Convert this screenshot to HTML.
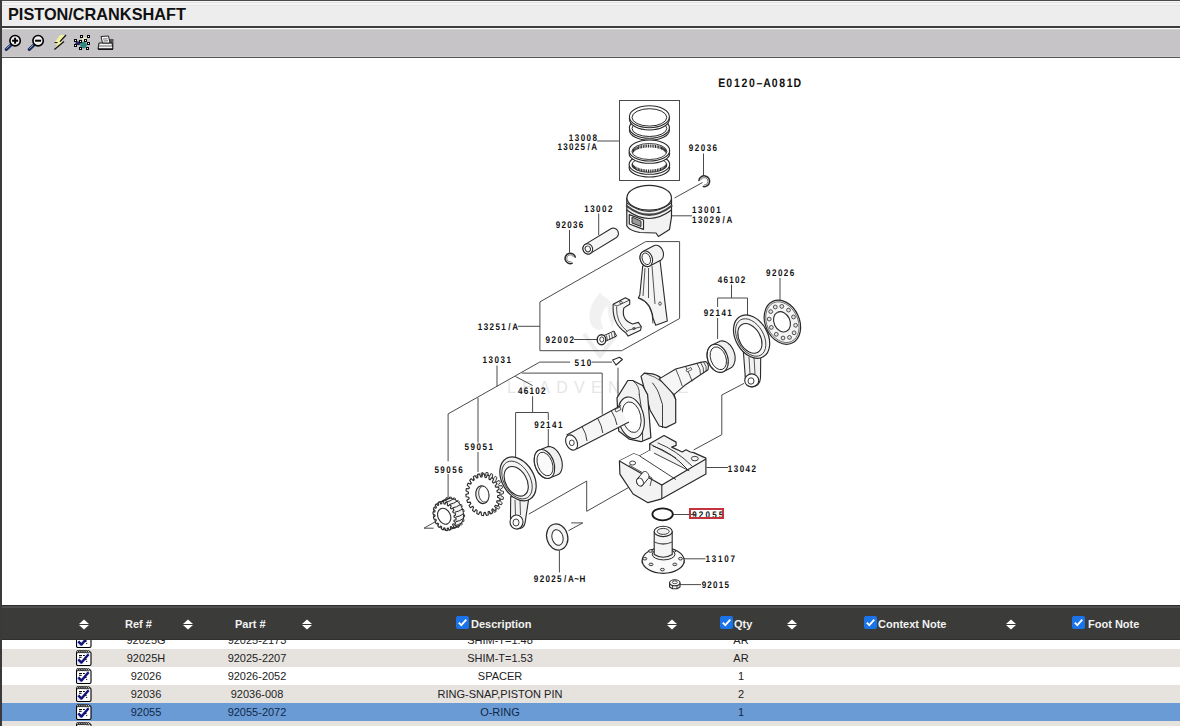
<!DOCTYPE html>
<html><head><meta charset="utf-8">
<style>
html,body{margin:0;padding:0;}
body{width:1180px;height:726px;overflow:hidden;position:relative;background:#fff;font-family:"Liberation Sans",sans-serif;}
.abs{position:absolute;}
#lb{left:0;top:0;width:2px;height:726px;background:#3a3a3a;}
#tt{left:0;top:0;width:1180px;height:1px;background:#4a4a4a;}
#title{left:2px;top:1px;width:1178px;height:25px;background:linear-gradient(#f6f6f6 0,#f6f6f6 1px,#e2e2e2 1px,#e2e2e2 2px,#f3f3f3 2px,#f3f3f3 4px,#e5e5e5 4px,#e5e5e5 5px,#ededed 5px);}
#title span{position:absolute;left:6px;top:4px;font-weight:bold;font-size:16.3px;color:#111;letter-spacing:0px;}
#l1{left:2px;top:26px;width:1178px;height:2px;background:#3c3c3c;}
#l2{left:2px;top:28px;width:1178px;height:1px;background:#fafafa;}
#tb{left:2px;top:29px;width:1178px;height:28px;background:linear-gradient(#d2d0d3 0,#d2d0d3 1px,#c6c4c7 1.5px,#c6c4c7 26.5px,#cfcdd0 27px);}
#l3{left:2px;top:57px;width:1178px;height:1px;background:#555;}
#diag{left:2px;top:58px;width:1178px;height:547px;background:#fff;}
#th{left:2px;top:605px;width:1178px;height:35px;background:linear-gradient(#2c2c2c 0,#2c2c2c 1px,#4e4e4c 1px,#4e4e4c 2.5px,#3b3c39 3px,#3b3c39 34px,#303030 34px);}
#th .t{position:absolute;top:13px;font-weight:bold;font-size:11px;color:#f2f2f2;line-height:13px;white-space:nowrap;}
.cb{position:absolute;}
.sort{position:absolute;width:10px;height:11px;}
.row{position:absolute;left:2px;width:1178px;height:18px;font-size:11px;color:#222;}
.row .c{position:absolute;top:3px;line-height:13px;white-space:nowrap;transform:translateX(-50%);}
.ic{position:absolute;left:74px;top:1px;width:16px;height:16px;}
.lb{font-family:"Liberation Sans",sans-serif;font-weight:bold;fill:#111;text-anchor:middle;text-rendering:geometricPrecision;}
</style></head><body>
<div id="tt" class="abs"></div>
<div id="title" class="abs"><span>PISTON/CRANKSHAFT</span></div>
<div id="l1" class="abs"></div>
<div id="l2" class="abs"></div>
<div id="tb" class="abs">
<svg width="130" height="28" style="position:absolute;left:0;top:0">
<g>
<line x1="8.6" y1="16.3" x2="4.3" y2="20.4" stroke="#1b2b5a" stroke-width="3.2" stroke-linecap="round"/>
<line x1="8.2" y1="16" x2="4.6" y2="19.4" stroke="#7aa0d0" stroke-width="1" stroke-linecap="round"/>
<circle cx="13.1" cy="11.7" r="5.2" fill="#f0f0f0" stroke="#000" stroke-width="1.6"/>
<line x1="10.1" y1="11.7" x2="16.1" y2="11.7" stroke="#000" stroke-width="2"/>
<line x1="13.1" y1="8.7" x2="13.1" y2="14.7" stroke="#000" stroke-width="2"/>
</g>
<g>
<line x1="31.6" y1="16.3" x2="27.3" y2="20.4" stroke="#1b2b5a" stroke-width="3.2" stroke-linecap="round"/>
<line x1="31.2" y1="16" x2="27.6" y2="19.4" stroke="#7aa0d0" stroke-width="1" stroke-linecap="round"/>
<circle cx="36.1" cy="11.7" r="5.2" fill="#f0f0f0" stroke="#000" stroke-width="1.6"/>
<line x1="33.1" y1="11.7" x2="39.1" y2="11.7" stroke="#000" stroke-width="2"/>
</g>
<g>
<polygon points="58,6 64,6 58,12.6 62,12.6 52.4,20.6 55.6,14.3 52.2,14.3" fill="#f3f0a0"/>
<polyline points="64,6 58,12.6" stroke="#111" stroke-width="1.3" fill="none"/>
<polyline points="62,12.6 52.4,20.6" stroke="#111" stroke-width="1.3" fill="none"/>
<line x1="52.4" y1="13.5" x2="55.6" y2="13.5" stroke="#222" stroke-width="1"/>
</g>
<g>
<ellipse cx="82.4" cy="10" rx="2.5" ry="2" fill="#ecebb8"/>
<ellipse cx="76" cy="14.3" rx="2.6" ry="2" fill="#23235e"/>
<circle cx="81.5" cy="16.1" r="3.3" fill="#2b8a80"/>
<g fill="#fff" stroke="#000" stroke-width="1"><rect x="72.5" y="10.5" width="2" height="2"/><rect x="72.5" y="15.5" width="2" height="2"/><rect x="78.5" y="6.5" width="2" height="2"/><rect x="85.5" y="6.5" width="2" height="2"/><rect x="77.5" y="11.5" width="2" height="2"/><rect x="82.5" y="10.5" width="2" height="2"/><rect x="85.5" y="13.5" width="2" height="2"/><rect x="77.5" y="18.5" width="2" height="2"/><rect x="84.5" y="18.5" width="2" height="2"/></g>
</g>
<g>
<rect x="105.5" y="10" width="6" height="8" fill="#555"/>
<polygon points="97,14 110,14 111,20 96,20" fill="#f4f4f4" stroke="#111" stroke-width="1"/>
<polygon points="99,7.5 106.5,7 108,14 100.5,14" fill="#fafafa" stroke="#222" stroke-width="1"/>
<line x1="101" y1="10" x2="105.5" y2="9.8" stroke="#444" stroke-width="0.8"/>
<line x1="101.5" y1="12" x2="106" y2="11.8" stroke="#444" stroke-width="0.8"/>
<line x1="96.5" y1="17" x2="110.5" y2="17" stroke="#666" stroke-width="1"/>
<line x1="96" y1="20.2" x2="111" y2="20.2" stroke="#000" stroke-width="1.2"/>
</g>
</svg>
</div>
<div id="l3" class="abs"></div>
<div id="diag" class="abs">
<svg id="dsvg" width="1178" height="547" viewBox="2 58 1178 547" style="position:absolute;left:0;top:0">
<g fill="#e6e6e6" font-family="Liberation Sans" font-size="16" letter-spacing="6.3"><text x="507" y="392.5">LEADVENTURE</text></g>
<path d="M600 293 C590 304 587 316 592 326 C595 330 600 331 603 328 C598 320 602 310 608 305 C607 315 611 322 612 327 C617 318 614 304 606 298 C603 296 601 295 600 293 Z" fill="#f1f1f1" stroke="#f0f0f0" stroke-width="0.5" stroke-linejoin="round" stroke-linecap="round"/>
<path d="M584 334 L600 356 L617 334" fill="none" stroke="#eeeeee" stroke-width="4"/>
<polyline points="597,141 619.5,141" fill="none" stroke="#4a4a4a" stroke-width="1"/>
<rect x="619.5" y="100.5" width="60" height="80" fill="none" stroke="#4a4a4a" stroke-width="1"/>
<polyline points="703.5,153.5 703.5,175.5" fill="none" stroke="#4a4a4a" stroke-width="1"/>
<polyline points="674.5,198 702.5,182.5" fill="none" stroke="#4a4a4a" stroke-width="1"/>
<polyline points="671.5,215.8 692,215.8" fill="none" stroke="#4a4a4a" stroke-width="1"/>
<polyline points="598.7,213.5 598.7,235" fill="none" stroke="#4a4a4a" stroke-width="1"/>
<polyline points="569.5,230 569.5,252.5" fill="none" stroke="#4a4a4a" stroke-width="1"/>
<polygon points="539.9,301.9 645.7,241.6 679.6,241.6 679.6,318.5 621.7,350.7 539.9,350.7" fill="none" stroke="#4a4a4a" stroke-width="1" stroke-linejoin="round"/>
<polyline points="518,326.3 540,326.3" fill="none" stroke="#4a4a4a" stroke-width="1"/>
<polyline points="574,339.5 598,339.5" fill="none" stroke="#4a4a4a" stroke-width="1"/>
<polyline points="731.5,284.5 731.5,298" fill="none" stroke="#4a4a4a" stroke-width="1"/>
<polyline points="717.6,307 717.6,298 747.5,298 747.5,315" fill="none" stroke="#4a4a4a" stroke-width="1"/>
<polyline points="717.6,318 717.6,339" fill="none" stroke="#4a4a4a" stroke-width="1"/>
<polyline points="780,278 780,300" fill="none" stroke="#4a4a4a" stroke-width="1"/>
<polyline points="497,365.5 497,386.5" fill="none" stroke="#4a4a4a" stroke-width="1"/>
<polyline points="448.1,461.3 448.1,413.9 539.7,362.1 570.2,362.1" fill="none" stroke="#4a4a4a" stroke-width="1"/>
<polyline points="591.6,362.1 612,362.1" fill="none" stroke="#4a4a4a" stroke-width="1"/>
<polyline points="521.9,373.1 602.2,373.1 602.2,414.5" fill="none" stroke="#4a4a4a" stroke-width="1"/>
<polyline points="515.3,376.4 532.6,385.5" fill="none" stroke="#4a4a4a" stroke-width="1"/>
<polyline points="618,367.7 618,396" fill="none" stroke="#4a4a4a" stroke-width="1"/>
<polyline points="478,397.8 478,442.5" fill="none" stroke="#4a4a4a" stroke-width="1"/>
<polyline points="478,452 478,472" fill="none" stroke="#4a4a4a" stroke-width="1"/>
<polyline points="532.6,396.2 532.6,412.5" fill="none" stroke="#4a4a4a" stroke-width="1"/>
<polyline points="515.6,458 515.6,412.5 548.3,412.5 548.3,420" fill="none" stroke="#4a4a4a" stroke-width="1"/>
<polyline points="548.3,429 548.3,446" fill="none" stroke="#4a4a4a" stroke-width="1"/>
<polyline points="448.1,474 448.1,499" fill="none" stroke="#4a4a4a" stroke-width="1"/>
<polyline points="706.6,467.5 728,467.5" fill="none" stroke="#4a4a4a" stroke-width="1"/>
<polyline points="693.7,449.9 721.8,434.7 721.8,395 744,383.4" fill="none" stroke="#4a4a4a" stroke-width="1"/>
<polyline points="528.8,514.1 586.7,481 586.7,511.3 637,482.7" fill="none" stroke="#4a4a4a" stroke-width="1"/>
<polyline points="571.2,522.9 582.8,522.9 568.5,530.6" fill="none" stroke="#4a4a4a" stroke-width="1"/>
<polyline points="559.4,550.3 559.4,572.5" fill="none" stroke="#4a4a4a" stroke-width="1"/>
<polyline points="673,514.5 695.5,514.5" fill="none" stroke="#4a4a4a" stroke-width="1"/>
<polyline points="683.1,558.8 705.5,558.8" fill="none" stroke="#4a4a4a" stroke-width="1"/>
<polyline points="679.6,584.6 701,584.6" fill="none" stroke="#4a4a4a" stroke-width="1"/>
<polyline points="424,528.2 443.2,517.2" fill="none" stroke="#4a4a4a" stroke-width="1"/>
<polyline points="424,528.2 433.6,528.2" fill="none" stroke="#4a4a4a" stroke-width="1"/>
<ellipse cx="649.4" cy="130.0" rx="20" ry="10.4" transform="rotate(0 649.4 130.0)" fill="#fff" stroke="#2a2a2a" stroke-width="1.1"/>
<ellipse cx="649.4" cy="127.8" rx="20" ry="10.4" transform="rotate(0 649.4 127.8)" fill="#fff" stroke="#2a2a2a" stroke-width="1.1"/>
<ellipse cx="649.4" cy="128.4" rx="17.4" ry="8.100000000000001" transform="rotate(0 649.4 128.4)" fill="none" stroke="#2a2a2a" stroke-width="1.0"/>
<ellipse cx="649.4" cy="119.0" rx="20" ry="11.0" transform="rotate(0 649.4 119.0)" fill="#fff" stroke="#2a2a2a" stroke-width="1.1"/>
<ellipse cx="649.4" cy="116.8" rx="20" ry="11.0" transform="rotate(0 649.4 116.8)" fill="#fff" stroke="#2a2a2a" stroke-width="1.1"/>
<ellipse cx="649.4" cy="117.39999999999999" rx="17.4" ry="8.7" transform="rotate(0 649.4 117.39999999999999)" fill="none" stroke="#2a2a2a" stroke-width="1.0"/>
<ellipse cx="649.4" cy="167.5" rx="20.3" ry="9.5" transform="rotate(0 649.4 167.5)" fill="#fff" stroke="#2a2a2a" stroke-width="1.1"/>
<ellipse cx="649.4" cy="164.5" rx="20.3" ry="9.8" transform="rotate(0 649.4 164.5)" fill="#fff" stroke="#2a2a2a" stroke-width="1.1"/>
<ellipse cx="649.4" cy="164.8" rx="17.5" ry="7.5" transform="rotate(0 649.4 164.8)" fill="none" stroke="#2a2a2a" stroke-width="0.9"/>
<line x1="666.4" y1="163.9" x2="666.4" y2="166.9" stroke="#2a2a2a" stroke-width="1"/>
<line x1="665.8" y1="164.6" x2="665.8" y2="167.6" stroke="#2a2a2a" stroke-width="1"/>
<line x1="665.1" y1="165.3" x2="665.1" y2="168.3" stroke="#2a2a2a" stroke-width="1"/>
<line x1="664.2" y1="166.0" x2="664.2" y2="169.0" stroke="#2a2a2a" stroke-width="1"/>
<line x1="663.1" y1="166.7" x2="663.1" y2="169.7" stroke="#2a2a2a" stroke-width="1"/>
<line x1="661.9" y1="167.3" x2="661.9" y2="170.3" stroke="#2a2a2a" stroke-width="1"/>
<line x1="660.5" y1="167.8" x2="660.5" y2="170.8" stroke="#2a2a2a" stroke-width="1"/>
<line x1="659.0" y1="168.3" x2="659.0" y2="171.3" stroke="#2a2a2a" stroke-width="1"/>
<line x1="657.4" y1="168.7" x2="657.4" y2="171.7" stroke="#2a2a2a" stroke-width="1"/>
<line x1="655.7" y1="169.0" x2="655.7" y2="172.0" stroke="#2a2a2a" stroke-width="1"/>
<line x1="654.0" y1="169.2" x2="654.0" y2="172.2" stroke="#2a2a2a" stroke-width="1"/>
<line x1="652.2" y1="169.4" x2="652.2" y2="172.4" stroke="#2a2a2a" stroke-width="1"/>
<line x1="650.3" y1="169.5" x2="650.3" y2="172.5" stroke="#2a2a2a" stroke-width="1"/>
<line x1="648.5" y1="169.5" x2="648.5" y2="172.5" stroke="#2a2a2a" stroke-width="1"/>
<line x1="646.6" y1="169.4" x2="646.6" y2="172.4" stroke="#2a2a2a" stroke-width="1"/>
<line x1="644.8" y1="169.2" x2="644.8" y2="172.2" stroke="#2a2a2a" stroke-width="1"/>
<line x1="643.1" y1="169.0" x2="643.1" y2="172.0" stroke="#2a2a2a" stroke-width="1"/>
<line x1="641.4" y1="168.7" x2="641.4" y2="171.7" stroke="#2a2a2a" stroke-width="1"/>
<line x1="639.8" y1="168.3" x2="639.8" y2="171.3" stroke="#2a2a2a" stroke-width="1"/>
<line x1="638.3" y1="167.8" x2="638.3" y2="170.8" stroke="#2a2a2a" stroke-width="1"/>
<line x1="636.9" y1="167.3" x2="636.9" y2="170.3" stroke="#2a2a2a" stroke-width="1"/>
<line x1="635.7" y1="166.7" x2="635.7" y2="169.7" stroke="#2a2a2a" stroke-width="1"/>
<line x1="634.6" y1="166.0" x2="634.6" y2="169.0" stroke="#2a2a2a" stroke-width="1"/>
<line x1="633.7" y1="165.3" x2="633.7" y2="168.3" stroke="#2a2a2a" stroke-width="1"/>
<line x1="633.0" y1="164.6" x2="633.0" y2="167.6" stroke="#2a2a2a" stroke-width="1"/>
<line x1="632.4" y1="163.9" x2="632.4" y2="166.9" stroke="#2a2a2a" stroke-width="1"/>
<ellipse cx="649.4" cy="153.5" rx="20.3" ry="9.8" transform="rotate(0 649.4 153.5)" fill="#fff" stroke="#2a2a2a" stroke-width="1.1"/>
<ellipse cx="649.4" cy="150.5" rx="20.3" ry="10.5" transform="rotate(0 649.4 150.5)" fill="#fff" stroke="#2a2a2a" stroke-width="1.1"/>
<ellipse cx="649.4" cy="151.5" rx="17.5" ry="8" transform="rotate(0 649.4 151.5)" fill="none" stroke="#2a2a2a" stroke-width="0.9"/>
<line x1="632.9" y1="149.8" x2="632.9" y2="152.8" stroke="#2a2a2a" stroke-width="1"/>
<line x1="633.5" y1="149.1" x2="633.5" y2="152.1" stroke="#2a2a2a" stroke-width="1"/>
<line x1="634.2" y1="148.4" x2="634.2" y2="151.4" stroke="#2a2a2a" stroke-width="1"/>
<line x1="635.1" y1="147.7" x2="635.1" y2="150.7" stroke="#2a2a2a" stroke-width="1"/>
<line x1="636.1" y1="147.1" x2="636.1" y2="150.1" stroke="#2a2a2a" stroke-width="1"/>
<line x1="637.3" y1="146.6" x2="637.3" y2="149.6" stroke="#2a2a2a" stroke-width="1"/>
<line x1="638.6" y1="146.1" x2="638.6" y2="149.1" stroke="#2a2a2a" stroke-width="1"/>
<line x1="640.1" y1="145.6" x2="640.1" y2="148.6" stroke="#2a2a2a" stroke-width="1"/>
<line x1="641.6" y1="145.3" x2="641.6" y2="148.3" stroke="#2a2a2a" stroke-width="1"/>
<line x1="643.3" y1="145.0" x2="643.3" y2="148.0" stroke="#2a2a2a" stroke-width="1"/>
<line x1="645.0" y1="144.7" x2="645.0" y2="147.7" stroke="#2a2a2a" stroke-width="1"/>
<line x1="646.7" y1="144.6" x2="646.7" y2="147.6" stroke="#2a2a2a" stroke-width="1"/>
<line x1="648.5" y1="144.5" x2="648.5" y2="147.5" stroke="#2a2a2a" stroke-width="1"/>
<line x1="650.3" y1="144.5" x2="650.3" y2="147.5" stroke="#2a2a2a" stroke-width="1"/>
<line x1="652.1" y1="144.6" x2="652.1" y2="147.6" stroke="#2a2a2a" stroke-width="1"/>
<line x1="653.8" y1="144.7" x2="653.8" y2="147.7" stroke="#2a2a2a" stroke-width="1"/>
<line x1="655.5" y1="145.0" x2="655.5" y2="148.0" stroke="#2a2a2a" stroke-width="1"/>
<line x1="657.2" y1="145.3" x2="657.2" y2="148.3" stroke="#2a2a2a" stroke-width="1"/>
<line x1="658.7" y1="145.6" x2="658.7" y2="148.6" stroke="#2a2a2a" stroke-width="1"/>
<line x1="660.2" y1="146.1" x2="660.2" y2="149.1" stroke="#2a2a2a" stroke-width="1"/>
<line x1="661.5" y1="146.6" x2="661.5" y2="149.6" stroke="#2a2a2a" stroke-width="1"/>
<line x1="662.7" y1="147.1" x2="662.7" y2="150.1" stroke="#2a2a2a" stroke-width="1"/>
<line x1="663.7" y1="147.7" x2="663.7" y2="150.7" stroke="#2a2a2a" stroke-width="1"/>
<line x1="664.6" y1="148.4" x2="664.6" y2="151.4" stroke="#2a2a2a" stroke-width="1"/>
<line x1="665.3" y1="149.1" x2="665.3" y2="152.1" stroke="#2a2a2a" stroke-width="1"/>
<line x1="665.9" y1="149.8" x2="665.9" y2="152.8" stroke="#2a2a2a" stroke-width="1"/>
<path d="M626.8 198 L626.8 226 Q630 231 640 232.5 L656 233 L658.4 236.5 L669.5 229.4 L671.5 217 L671.5 198 Z" fill="#f2f2f2" stroke="#2a2a2a" stroke-width="1.2" stroke-linejoin="round" stroke-linecap="round"/>
<ellipse cx="649.2" cy="197.8" rx="22.3" ry="12.4" transform="rotate(0 649.2 197.8)" fill="#fff" stroke="#2a2a2a" stroke-width="1.2"/>
<path d="M626.8 203 Q649 220 671.5 203" fill="none" stroke="#2a2a2a" stroke-width="1" stroke-linejoin="round" stroke-linecap="round"/>
<path d="M626.8 206 Q649 223.5 671.5 206" fill="none" stroke="#444" stroke-width="2.2" stroke-linejoin="round" stroke-linecap="round"/>
<path d="M626.8 210 Q649 227 671.5 210" fill="none" stroke="#2a2a2a" stroke-width="1.2" stroke-linejoin="round" stroke-linecap="round"/>
<path d="M629.3 214.6 L629.3 224 L643.5 229.4 L643.5 220 Z" fill="#fff" stroke="#2a2a2a" stroke-width="1.2" stroke-linejoin="round" stroke-linecap="round"/>
<path d="M632 217.5 L632 223 L641 226.5 L641 221.5 Z" fill="#9a9a9a" stroke="#2a2a2a" stroke-width="1" stroke-linejoin="round" stroke-linecap="round"/>
<path d="M698.9 180.4 A5.4 5.4 0 1 1 703.3 186.6" fill="none" stroke="#2a2a2a" stroke-width="1.5" stroke-linejoin="round" stroke-linecap="round"/>
<path d="M700.6 180.0 A3.8 3.8 0 1 1 704.2 185.1" fill="none" stroke="#2a2a2a" stroke-width="0.6" stroke-linejoin="round" stroke-linecap="round"/>
<path d="M572.1 263.3 A5.2 5.2 0 1 1 575.3 257.1" fill="none" stroke="#2a2a2a" stroke-width="1.5" stroke-linejoin="round" stroke-linecap="round"/>
<path d="M570.9 261.9 A3.6 3.6 0 1 1 573.6 256.9" fill="none" stroke="#2a2a2a" stroke-width="0.6" stroke-linejoin="round" stroke-linecap="round"/>
<polygon points="582.9,248.7 582.9,248.1 583.0,247.4 583.2,246.8 583.5,246.2 583.8,245.7 584.2,245.2 584.7,244.8 585.2,244.4 610.9,228.7 611.5,228.4 612.1,228.2 612.7,228.1 613.3,228.1 614.0,228.2 614.6,228.3 615.2,228.6 615.8,228.9 616.4,229.3 616.8,229.7 617.3,230.2 617.7,230.8 618.0,231.4 618.2,232.1 618.3,232.7 618.4,233.4 618.4,234.0 618.3,234.7 618.1,235.3 617.8,235.9 617.5,236.4 617.1,236.9 616.6,237.3 616.1,237.7 590.4,253.4 589.8,253.7 589.2,253.9 588.6,254.0 588.0,254.0 587.3,253.9 586.7,253.8 586.1,253.6 585.5,253.2 585.0,252.8 584.5,252.4 584.0,251.9 583.6,251.3 583.3,250.7 583.1,250.1 583.0,249.4" fill="#f6f6f6" stroke="#2a2a2a" stroke-width="1.1" stroke-linejoin="round"/>
<ellipse cx="587.8" cy="248.9" rx="4.8" ry="5.2" transform="rotate(-30 587.8 248.9)" fill="#fff" stroke="#2a2a2a" stroke-width="1.1"/>
<ellipse cx="587.8" cy="248.9" rx="2.6" ry="3.0" transform="rotate(-30 587.8 248.9)" fill="#fafafa" stroke="#2a2a2a" stroke-width="0.9"/>
<path d="M642.7 266 L639.8 294.9 L638.4 297.8 Q651 302 653 318 L655.7 325.3 L667.3 321 L665.8 309.4 L660 260.2 Z" fill="#f4f4f4" stroke="#2a2a2a" stroke-width="1.1" stroke-linejoin="round" stroke-linecap="round"/>
<polygon points="640.0,257.8 640.0,256.8 640.2,255.8 640.4,254.9 640.7,254.1 641.1,253.3 641.6,252.6 642.2,252.1 642.9,251.6 653.8,245.8 654.5,245.5 655.2,245.3 656.0,245.2 656.8,245.3 657.6,245.5 658.5,245.8 659.2,246.2 660.0,246.8 660.7,247.5 661.4,248.2 661.9,249.1 662.4,250.0 662.8,250.9 663.1,251.9 663.4,253.0 663.5,254.0 663.5,255.0 663.3,255.9 663.1,256.9 662.8,257.7 662.4,258.5 661.9,259.2 661.3,259.7 660.6,260.2 649.8,266.0 649.0,266.3 648.3,266.5 647.5,266.6 646.7,266.5 645.9,266.3 645.0,266.0 644.2,265.6 643.5,265.0 642.8,264.3 642.1,263.6 641.6,262.7 641.1,261.8 640.7,260.9 640.4,259.9 640.1,258.8" fill="#f2f2f2" stroke="#2a2a2a" stroke-width="1.1" stroke-linejoin="round"/>
<ellipse cx="646.3" cy="258.8" rx="6" ry="8" transform="rotate(-20 646.3 258.8)" fill="#fff" stroke="#2a2a2a" stroke-width="1.1"/>
<ellipse cx="646.3" cy="258.8" rx="4" ry="6" transform="rotate(-20 646.3 258.8)" fill="#fafafa" stroke="#2a2a2a" stroke-width="0.9"/>
<polyline points="645,268 643,296" fill="none" stroke="#2a2a2a" stroke-width="0.8"/>
<polyline points="648.5,268 648.5,298" fill="none" stroke="#2a2a2a" stroke-width="0.8"/>
<polyline points="652,266 655,304" fill="none" stroke="#2a2a2a" stroke-width="0.8"/>
<ellipse cx="660" cy="303.6" rx="1.3" ry="1.6" transform="rotate(0 660 303.6)" fill="none" stroke="#2a2a2a" stroke-width="0.8"/>
<path d="M638.4 298 Q653 303 653 323" fill="none" stroke="#2a2a2a" stroke-width="0.9" stroke-linejoin="round" stroke-linecap="round"/>
<path d="M613.1 304.3 L625.4 297.8 L629.7 300 L629.7 304.3 L623.9 307.9 Q621 320 632.6 324 L638.4 322.4 L641.3 326.7 L640.5 330.3 L628.2 336.1 L625.4 332.5 Q613 324 613.1 308 Z" fill="#f4f4f4" stroke="#2a2a2a" stroke-width="1.1" stroke-linejoin="round" stroke-linecap="round"/>
<path d="M616.5 307 Q616 323 627 331" fill="none" stroke="#2a2a2a" stroke-width="0.8" stroke-linejoin="round" stroke-linecap="round"/>
<polyline points="613.1,304.3 617,306 629.7,300" fill="none" stroke="#2a2a2a" stroke-width="0.8"/>
<polyline points="625.4,332.5 629,330 641.3,326.7" fill="none" stroke="#2a2a2a" stroke-width="0.8"/>
<ellipse cx="621" cy="302.5" rx="1.5" ry="1" transform="rotate(0 621 302.5)" fill="none" stroke="#2a2a2a" stroke-width="0.7"/>
<ellipse cx="634" cy="328.5" rx="1.5" ry="1" transform="rotate(0 634 328.5)" fill="none" stroke="#2a2a2a" stroke-width="0.7"/>
<polygon points="603,336 614,331 616.5,336 605,341.5" fill="#fff" stroke="#2a2a2a" stroke-width="1" stroke-linejoin="round"/>
<line x1="606.5" y1="335.5" x2="607.5" y2="340.8" stroke="#2a2a2a" stroke-width="0.8"/>
<line x1="609.0" y1="334.4" x2="610.0" y2="339.7" stroke="#2a2a2a" stroke-width="0.8"/>
<line x1="611.5" y1="333.2" x2="612.5" y2="338.5" stroke="#2a2a2a" stroke-width="0.8"/>
<line x1="614.0" y1="332.1" x2="615.0" y2="337.4" stroke="#2a2a2a" stroke-width="0.8"/>
<ellipse cx="601.5" cy="339.7" rx="4.3" ry="5" transform="rotate(0 601.5 339.7)" fill="#fff" stroke="#2a2a2a" stroke-width="1.4"/>
<ellipse cx="601.8" cy="339.5" rx="2" ry="2.6" transform="rotate(0 601.8 339.5)" fill="none" stroke="#2a2a2a" stroke-width="0.9"/>
<polygon points="707.1,354.4 707.2,352.7 707.5,351.1 708.0,349.6 708.7,348.2 709.5,347.0 710.5,346.0 711.6,345.2 718.4,341.9 719.5,341.4 720.8,341.0 722.1,340.9 723.5,341.1 724.9,341.5 726.3,342.1 727.6,342.9 728.9,344.0 730.2,345.2 731.3,346.6 732.3,348.2 733.2,349.8 733.9,351.6 734.5,353.4 734.9,355.2 735.1,357.1 735.1,358.9 735.0,360.6 734.6,362.2 734.1,363.7 733.5,365.1 732.7,366.3 731.7,367.3 730.6,368.1 723.8,371.4 722.7,371.9 721.4,372.3 720.1,372.4 718.7,372.2 717.3,371.8 715.9,371.2 714.6,370.4 713.3,369.3 712.0,368.1 710.9,366.7 709.9,365.1 709.0,363.5 708.3,361.7 707.7,359.9 707.3,358.1 707.1,356.2" fill="#f0f0f0" stroke="#2a2a2a" stroke-width="1.1" stroke-linejoin="round"/>
<ellipse cx="717.7" cy="358.3" rx="10" ry="14.5" transform="rotate(-20 717.7 358.3)" fill="#fff" stroke="#2a2a2a" stroke-width="1.1"/>
<ellipse cx="718.3000000000001" cy="358.3" rx="7.6" ry="11.8" transform="rotate(-20 718.3000000000001 358.3)" fill="#fafafa" stroke="#2a2a2a" stroke-width="0.9"/>
<ellipse cx="782.4" cy="322.2" rx="17" ry="23" transform="rotate(-25 782.4 322.2)" fill="#f4f4f4" stroke="#2a2a2a" stroke-width="1.2"/>
<ellipse cx="782.4" cy="322.2" rx="15.5" ry="21.3" transform="rotate(-25 782.4 322.2)" fill="none" stroke="#2a2a2a" stroke-width="0.6"/>
<ellipse cx="782" cy="321.8" rx="8" ry="10.5" transform="rotate(-25 782 321.8)" fill="#fff" stroke="#2a2a2a" stroke-width="1.1"/>
<circle cx="793.5" cy="317.0" r="1.9" fill="#e6e6e6" stroke="#2a2a2a" stroke-width="0.8"/>
<circle cx="795.6" cy="325.3" r="1.9" fill="#e6e6e6" stroke="#2a2a2a" stroke-width="0.8"/>
<circle cx="794.1" cy="332.8" r="1.9" fill="#e6e6e6" stroke="#2a2a2a" stroke-width="0.8"/>
<circle cx="789.5" cy="337.4" r="1.9" fill="#e6e6e6" stroke="#2a2a2a" stroke-width="0.8"/>
<circle cx="783.0" cy="338.0" r="1.9" fill="#e6e6e6" stroke="#2a2a2a" stroke-width="0.8"/>
<circle cx="776.3" cy="334.3" r="1.9" fill="#e6e6e6" stroke="#2a2a2a" stroke-width="0.8"/>
<circle cx="771.3" cy="327.4" r="1.9" fill="#e6e6e6" stroke="#2a2a2a" stroke-width="0.8"/>
<circle cx="769.2" cy="319.1" r="1.9" fill="#e6e6e6" stroke="#2a2a2a" stroke-width="0.8"/>
<circle cx="770.7" cy="311.6" r="1.9" fill="#e6e6e6" stroke="#2a2a2a" stroke-width="0.8"/>
<circle cx="775.3" cy="307.0" r="1.9" fill="#e6e6e6" stroke="#2a2a2a" stroke-width="0.8"/>
<circle cx="781.8" cy="306.4" r="1.9" fill="#e6e6e6" stroke="#2a2a2a" stroke-width="0.8"/>
<circle cx="788.5" cy="310.1" r="1.9" fill="#e6e6e6" stroke="#2a2a2a" stroke-width="0.8"/>
<path d="M743.4 352 L745 373 Q745 386 752 387 Q760 386 760.5 378 L760.7 356 Z" fill="#f2f2f2" stroke="#2a2a2a" stroke-width="1.1" stroke-linejoin="round" stroke-linecap="round"/>
<polyline points="749,357 750,374" fill="none" stroke="#2a2a2a" stroke-width="0.8"/>
<polyline points="754,357 755,374" fill="none" stroke="#2a2a2a" stroke-width="0.8"/>
<ellipse cx="751.6" cy="336.6" rx="16" ry="23.3" transform="rotate(-30 751.6 336.6)" fill="#f4f4f4" stroke="#2a2a2a" stroke-width="1.2"/>
<ellipse cx="750.7" cy="337.5" rx="13" ry="20.3" transform="rotate(-30 750.7 337.5)" fill="none" stroke="#2a2a2a" stroke-width="0.8"/>
<ellipse cx="749.9" cy="338.4" rx="10.5" ry="16" transform="rotate(-30 749.9 338.4)" fill="#fff" stroke="#2a2a2a" stroke-width="1.1"/>
<ellipse cx="751.7" cy="380.4" rx="7" ry="6.5" transform="rotate(0 751.7 380.4)" fill="#fff" stroke="#2a2a2a" stroke-width="1.1"/>
<ellipse cx="751" cy="381" rx="3" ry="3.2" transform="rotate(0 751 381)" fill="none" stroke="#2a2a2a" stroke-width="0.9"/>
<path d="M641 376.4 L644.3 373.1 L652.6 373.9 Q660 376 662.5 379.7 L672.4 389.6 L675.7 399.5 L675.7 422.7 L665.8 427.6 L659.2 426 L650 410 Z" fill="#f0f0f0" stroke="#2a2a2a" stroke-width="1.2" stroke-linejoin="round" stroke-linecap="round"/>
<path d="M652.6 383 Q658 390 659.2 394.6 L662.5 404.5 L662.5 427.6" fill="none" stroke="#2a2a2a" stroke-width="0.9" stroke-linejoin="round" stroke-linecap="round"/>
<path d="M644.3 373.1 Q668 380 675.7 399.5" fill="none" stroke="#2a2a2a" stroke-width="0.7" stroke-linejoin="round" stroke-linecap="round"/>
<path d="M659.2 378.9 L675.7 369 L700.5 362.4 L705.5 361.5 Q709.5 364 708 369.8 L685.6 384.7 L674 394.6 Z" fill="#f6f6f6" stroke="#2a2a2a" stroke-width="1.1" stroke-linejoin="round" stroke-linecap="round"/>
<path d="M675.7 369 Q679.7 377.65 682.3 386.3" fill="none" stroke="#2a2a2a" stroke-width="0.8"/>
<path d="M685.6 366.5 Q689.6 373.95 692.2 381.4" fill="none" stroke="#2a2a2a" stroke-width="0.8"/>
<path d="M697 363.5 Q701 369.25 700.5 375" fill="none" stroke="#2a2a2a" stroke-width="0.8"/>
<path d="M700.5 362.4 Q704.5 367.79999999999995 703.5 373.2" fill="none" stroke="#2a2a2a" stroke-width="0.8"/>
<path d="M703.5 361.9 Q707.5 366.7 706 371.5" fill="none" stroke="#2a2a2a" stroke-width="0.8"/>
<polygon points="686,370 691,367.5 692,369.5 687,372" fill="#fff" stroke="#2a2a2a" stroke-width="0.7" stroke-linejoin="round"/>
<path d="M617 397.9 L627.8 380.5 L632.7 380.5 L642.6 385.5 L647.6 394.6 L650.9 437.6 L641 441.7 L629.4 439.2 L618.7 431 Z" fill="#f2f2f2" stroke="#2a2a2a" stroke-width="1.2" stroke-linejoin="round" stroke-linecap="round"/>
<path d="M639.3 394.6 Q643 415 642.6 440.9" fill="none" stroke="#2a2a2a" stroke-width="0.9" stroke-linejoin="round" stroke-linecap="round"/>
<path d="M632.7 380.5 Q640 386 639.3 394.6" fill="none" stroke="#2a2a2a" stroke-width="0.8" stroke-linejoin="round" stroke-linecap="round"/>
<ellipse cx="631.1" cy="417.7" rx="12.8" ry="21" transform="rotate(-12 631.1 417.7)" fill="#f8f8f8" stroke="#2a2a2a" stroke-width="1.1"/>
<ellipse cx="631.6" cy="417.2" rx="9.2" ry="15.5" transform="rotate(-12 631.6 417.2)" fill="#fff" stroke="#2a2a2a" stroke-width="0.9"/>
<path d="M566.6 435 L619.5 406.2 L627.8 422.7 L576.5 449.1 Z" fill="#f6f6f6" stroke="#2a2a2a" stroke-width="0" stroke-linejoin="round" stroke-linecap="round"/>
<polyline points="566.6,435 621,405.5" fill="none" stroke="#2a2a2a" stroke-width="1.1"/>
<polyline points="576.5,449.1 629,422" fill="none" stroke="#2a2a2a" stroke-width="1.1"/>
<ellipse cx="571.6" cy="442.5" rx="5.5" ry="8" transform="rotate(-25 571.6 442.5)" fill="#fff" stroke="#2a2a2a" stroke-width="1.1"/>
<ellipse cx="571.8" cy="442.8" rx="2.4" ry="2.8" transform="rotate(0 571.8 442.8)" fill="none" stroke="#2a2a2a" stroke-width="0.9"/>
<path d="M582 426.5 Q586.5 433.75 587 441" fill="none" stroke="#2a2a2a" stroke-width="0.9"/>
<path d="M597.5 418 Q602.0 425.5 602.8 433" fill="none" stroke="#2a2a2a" stroke-width="0.9"/>
<path d="M611.2 410.5 Q615.7 417.75 617 425" fill="none" stroke="#2a2a2a" stroke-width="0.9"/>
<polygon points="615,409.5 620,407 621,409.5 616,412" fill="#fff" stroke="#2a2a2a" stroke-width="0.8" stroke-linejoin="round"/>
<polygon points="612.6,360 619.5,357.2 622.4,359.5 616,365" fill="#fff" stroke="#2a2a2a" stroke-width="1.1" stroke-linejoin="round"/>
<path d="M510.7 496.5 L510.5 516 Q510 528 517 529 Q524 529 525.1 522.7 L528.6 499.3 Z" fill="#f2f2f2" stroke="#2a2a2a" stroke-width="1.1" stroke-linejoin="round" stroke-linecap="round"/>
<polyline points="515,500 515.5,515" fill="none" stroke="#2a2a2a" stroke-width="0.8"/>
<polyline points="520,500 520.5,515" fill="none" stroke="#2a2a2a" stroke-width="0.8"/>
<ellipse cx="518" cy="478.9" rx="16" ry="23.5" transform="rotate(-30 518 478.9)" fill="#f4f4f4" stroke="#2a2a2a" stroke-width="1.2"/>
<ellipse cx="517" cy="480" rx="13" ry="20.5" transform="rotate(-30 517 480)" fill="none" stroke="#2a2a2a" stroke-width="0.8"/>
<ellipse cx="516.2" cy="481.3" rx="10.5" ry="16" transform="rotate(-30 516.2 481.3)" fill="#fff" stroke="#2a2a2a" stroke-width="1.1"/>
<ellipse cx="516.5" cy="522" rx="6.5" ry="7" transform="rotate(0 516.5 522)" fill="#fff" stroke="#2a2a2a" stroke-width="1.1"/>
<ellipse cx="516" cy="522.5" rx="3" ry="3.5" transform="rotate(0 516 522.5)" fill="none" stroke="#2a2a2a" stroke-width="0.9"/>
<polygon points="534.2,459.8 534.3,458.0 534.6,456.3 535.0,454.8 535.6,453.4 536.3,452.2 537.2,451.2 538.2,450.4 539.4,449.9 546.9,446.9 548.1,446.6 549.4,446.5 550.7,446.7 552.0,447.2 553.4,447.8 554.7,448.7 556.0,449.8 557.2,451.1 558.3,452.6 559.3,454.2 560.2,455.9 560.9,457.8 561.5,459.6 562.0,461.5 562.2,463.4 562.3,465.2 562.2,467.0 561.9,468.7 561.5,470.2 560.9,471.6 560.2,472.8 559.3,473.8 558.2,474.6 557.1,475.1 549.6,478.1 548.4,478.4 547.1,478.5 545.8,478.3 544.5,477.8 543.1,477.2 541.8,476.3 540.5,475.2 539.3,473.9 538.2,472.4 537.2,470.8 536.3,469.1 535.6,467.2 535.0,465.4 534.5,463.5 534.3,461.6" fill="#f0f0f0" stroke="#2a2a2a" stroke-width="1.1" stroke-linejoin="round"/>
<ellipse cx="544.5" cy="464" rx="9.5" ry="15" transform="rotate(-20 544.5 464)" fill="#fff" stroke="#2a2a2a" stroke-width="1.1"/>
<ellipse cx="545.0" cy="464" rx="7.3" ry="12.3" transform="rotate(-20 545.0 464)" fill="#fafafa" stroke="#2a2a2a" stroke-width="0.9"/>
<polygon points="500.7,490.8 503.4,491.2 503.6,493.6 501.1,494.3 501.0,495.8 503.5,497.2 503.2,499.5 500.5,499.3 500.1,500.7 502.3,502.8 501.4,504.9 498.9,503.8 498.2,504.9 499.8,507.7 498.4,509.3 496.2,507.4 495.2,508.2 496.2,511.4 494.5,512.4 492.7,509.9 491.6,510.3 491.8,513.6 489.9,514.0 488.8,511.0 487.5,511.1 487.0,514.2 485.0,513.9 484.6,510.7 483.4,510.3 482.1,513.1 480.3,512.2 480.6,509.0 479.5,508.2 477.7,510.4 476.0,508.9 477.1,506.0 476.2,504.9 473.9,506.3 472.6,504.3 474.4,502.0 473.7,500.7 471.1,501.1 470.4,498.9 472.6,497.3 472.3,495.8 469.6,495.4 469.4,493.0 471.9,492.3 472.0,490.8 469.5,489.4 469.8,487.1 472.5,487.3 472.9,485.9 470.7,483.8 471.6,481.7 474.1,482.8 474.8,481.7 473.2,478.9 474.6,477.3 476.8,479.2 477.8,478.4 476.8,475.2 478.5,474.2 480.3,476.7 481.4,476.3 481.2,473.0 483.1,472.6 484.2,475.6 485.5,475.5 486.0,472.4 488.0,472.7 488.4,475.9 489.6,476.3 490.9,473.5 492.7,474.4 492.4,477.6 493.5,478.4 495.3,476.2 497.0,477.7 495.9,480.6 496.8,481.7 499.1,480.3 500.4,482.3 498.6,484.6 499.3,485.9 501.9,485.5 502.6,487.7 500.4,489.3" fill="#e8e8e8" stroke="#2a2a2a" stroke-width="0.9" stroke-linejoin="round"/>
<polygon points="497.2,492.2 499.9,492.6 500.1,495.0 497.6,495.7 497.5,497.2 500.0,498.6 499.7,500.9 497.0,500.7 496.6,502.1 498.8,504.2 497.9,506.3 495.4,505.2 494.7,506.3 496.3,509.1 494.9,510.7 492.7,508.8 491.7,509.6 492.7,512.8 491.0,513.8 489.2,511.3 488.1,511.7 488.3,515.0 486.4,515.4 485.3,512.4 484.0,512.5 483.5,515.6 481.5,515.3 481.1,512.1 479.9,511.7 478.6,514.5 476.8,513.6 477.1,510.4 476.0,509.6 474.2,511.8 472.5,510.3 473.6,507.4 472.7,506.3 470.4,507.7 469.1,505.7 470.9,503.4 470.2,502.1 467.6,502.5 466.9,500.3 469.1,498.7 468.8,497.2 466.1,496.8 465.9,494.4 468.4,493.7 468.5,492.2 466.0,490.8 466.3,488.5 469.0,488.7 469.4,487.3 467.2,485.2 468.1,483.1 470.6,484.2 471.3,483.1 469.7,480.3 471.1,478.7 473.3,480.6 474.3,479.8 473.3,476.6 475.0,475.6 476.8,478.1 477.9,477.7 477.7,474.4 479.6,474.0 480.7,477.0 482.0,476.9 482.5,473.8 484.5,474.1 484.9,477.3 486.1,477.7 487.4,474.9 489.2,475.8 488.9,479.0 490.0,479.8 491.8,477.6 493.5,479.1 492.4,482.0 493.3,483.1 495.6,481.7 496.9,483.7 495.1,486.0 495.8,487.3 498.4,486.9 499.1,489.1 496.9,490.7" fill="#fff" stroke="#2a2a2a" stroke-width="1.1" stroke-linejoin="round"/>
<ellipse cx="482.3" cy="494.7" rx="6.5" ry="9" transform="rotate(-10 482.3 494.7)" fill="#ececec" stroke="#2a2a2a" stroke-width="1.1"/>
<ellipse cx="483.8" cy="494.2" rx="5" ry="8" transform="rotate(-10 483.8 494.2)" fill="#fff" stroke="#2a2a2a" stroke-width="0.8"/>
<polygon points="461.7,509.2 463.6,509.4 464.2,511.5 462.5,512.3 462.7,513.7 464.6,514.8 464.6,516.9 462.7,516.9 462.5,518.2 464.1,519.9 463.6,521.7 461.7,520.9 461.1,521.9 462.3,524.1 461.2,525.4 459.5,523.9 458.7,524.5 459.2,526.9 457.8,527.6 456.5,525.5 455.5,525.7 455.4,528.0 453.7,527.9 453.0,525.5 451.9,525.2 451.2,527.3 449.5,526.4 449.5,524.0 448.5,523.3 447.2,524.7 445.7,523.2 446.3,521.1 445.5,520.0 443.8,520.7 442.7,518.7 443.9,517.2 443.3,515.8 441.4,515.6 440.8,513.5 442.5,512.7 442.3,511.3 440.4,510.2 440.4,508.1 442.3,508.1 442.5,506.8 440.9,505.1 441.4,503.3 443.3,504.1 443.9,503.1 442.7,500.9 443.8,499.6 445.5,501.1 446.3,500.5 445.8,498.1 447.2,497.4 448.5,499.5 449.5,499.3 449.6,497.0 451.3,497.1 452.0,499.5 453.1,499.8 453.8,497.7 455.5,498.6 455.5,501.0 456.5,501.7 457.8,500.3 459.3,501.8 458.7,503.9 459.5,505.0 461.2,504.3 462.3,506.3 461.1,507.8" fill="#e6e6e6" stroke="#2a2a2a" stroke-width="0.9" stroke-linejoin="round"/>
<polygon points="433.5,512.3 433.6,510.6 434.0,508.9 434.6,507.4 435.3,506.0 436.1,504.8 437.2,503.8 438.3,503.0 439.5,502.4 447.5,498.9 448.9,498.5 450.3,498.4 451.7,498.5 453.1,498.9 454.6,499.5 456.0,500.3 457.3,501.4 458.6,502.6 459.7,504.0 460.8,505.5 461.6,507.2 462.4,508.9 462.9,510.7 463.3,512.6 463.5,514.4 463.5,516.2 463.4,518.0 463.0,519.6 462.4,521.1 461.7,522.5 460.9,523.7 459.8,524.7 458.7,525.5 457.5,526.1 449.5,529.6 448.1,530.0 446.7,530.1 445.3,530.0 443.9,529.6 442.4,529.0 441.0,528.2 439.7,527.1 438.4,525.9 437.3,524.5 436.2,523.0 435.4,521.3 434.6,519.6 434.1,517.8 433.7,515.9 433.5,514.1" fill="#f2f2f2" stroke="#2a2a2a" stroke-width="1.0" stroke-linejoin="round"/>
<path d="M438.5 502.3 q4 -0.5 8 -3.5" fill="none" stroke="#2a2a2a" stroke-width="1"/>
<path d="M442.0 501.4 q4 -0.5 8 -3.5" fill="none" stroke="#2a2a2a" stroke-width="1"/>
<path d="M445.8 502.1 q4 -0.5 8 -3.5" fill="none" stroke="#2a2a2a" stroke-width="1"/>
<path d="M449.5 504.4 q4 -0.5 8 -3.5" fill="none" stroke="#2a2a2a" stroke-width="1"/>
<path d="M452.6 507.9 q4 -0.5 8 -3.5" fill="none" stroke="#2a2a2a" stroke-width="1"/>
<path d="M454.8 512.2 q4 -0.5 8 -3.5" fill="none" stroke="#2a2a2a" stroke-width="1"/>
<path d="M455.9 517.0 q4 -0.5 8 -3.5" fill="none" stroke="#2a2a2a" stroke-width="1"/>
<path d="M455.8 521.7 q4 -0.5 8 -3.5" fill="none" stroke="#2a2a2a" stroke-width="1"/>
<path d="M454.4 525.8 q4 -0.5 8 -3.5" fill="none" stroke="#2a2a2a" stroke-width="1"/>
<path d="M452.0 528.8 q4 -0.5 8 -3.5" fill="none" stroke="#2a2a2a" stroke-width="1"/>
<polygon points="453.2,512.8 455.1,513.0 455.6,515.0 454.0,515.8 454.1,517.1 456.0,518.0 456.0,520.0 454.1,520.0 453.9,521.2 455.6,522.9 455.0,524.6 453.1,523.7 452.6,524.7 453.8,526.9 452.7,528.1 451.0,526.5 450.3,527.1 450.9,529.5 449.4,530.2 448.2,528.0 447.2,528.2 447.2,530.6 445.6,530.5 444.9,528.1 443.9,527.8 443.2,529.9 441.6,529.1 441.6,526.7 440.6,526.0 439.3,527.5 437.9,526.1 438.6,524.0 437.8,523.0 436.1,523.7 435.1,521.9 436.3,520.4 435.8,519.2 433.9,519.0 433.4,517.0 435.0,516.2 434.9,514.9 433.0,514.0 433.0,512.0 434.9,512.0 435.1,510.8 433.4,509.1 434.0,507.4 435.9,508.3 436.4,507.3 435.2,505.1 436.3,503.9 438.0,505.5 438.7,504.9 438.1,502.5 439.6,501.8 440.8,504.0 441.8,503.8 441.8,501.4 443.4,501.5 444.1,503.9 445.1,504.2 445.8,502.1 447.4,502.9 447.4,505.3 448.4,506.0 449.7,504.5 451.1,505.9 450.4,508.0 451.2,509.0 452.9,508.3 453.9,510.1 452.7,511.6" fill="#fff" stroke="#2a2a2a" stroke-width="1.1" stroke-linejoin="round"/>
<ellipse cx="444.2" cy="516.2" rx="6.2" ry="8.3" transform="rotate(-25 444.2 516.2)" fill="#fff" stroke="#2a2a2a" stroke-width="1.1"/>
<ellipse cx="557.2" cy="537" rx="10.5" ry="13.2" transform="rotate(-15 557.2 537)" fill="#f4f4f4" stroke="#2a2a2a" stroke-width="1.2"/>
<ellipse cx="557.5" cy="537.5" rx="5.5" ry="8" transform="rotate(-15 557.5 537.5)" fill="#fff" stroke="#2a2a2a" stroke-width="1"/>
<polygon points="619.4,461 633.7,453.7 639.7,456 649.7,450.4 649.7,443.8 664,435.5 676.1,442.1 676.1,445.4 671.7,447.1 682.2,452 686,449.8 690.4,452 693.7,452.6 705.9,458.1 705.9,474 661.8,498.8 648,502.7 633.1,494 619.9,474.1" fill="#f3f3f3" stroke="#2a2a2a" stroke-width="1.2" stroke-linejoin="round"/>
<polygon points="619.4,461 633.7,453.7 639.7,456 649.7,450.4 682.2,468 705.9,458.1 661.8,485" fill="#fff" stroke="#2a2a2a" stroke-width="0" stroke-linejoin="round"/>
<polyline points="619.4,461 661.8,485 705.9,459" fill="none" stroke="#2a2a2a" stroke-width="1.1"/>
<polyline points="661.8,485 661.8,498.8" fill="none" stroke="#2a2a2a" stroke-width="1.1"/>
<polyline points="639.7,456 676,479.6" fill="none" stroke="#2a2a2a" stroke-width="0.9"/>
<polyline points="654.1,453.1 689.3,470.8" fill="none" stroke="#2a2a2a" stroke-width="0.9"/>
<polyline points="629,465 652,478 650,486" fill="none" stroke="#2a2a2a" stroke-width="0.8"/>
<polyline points="649.7,443.8 676.1,458" fill="none" stroke="#2a2a2a" stroke-width="0.8"/>
<path d="M653 446 Q672 452 688 470" fill="none" stroke="#2a2a2a" stroke-width="1" stroke-linejoin="round" stroke-linecap="round"/>
<path d="M658 443 Q676 450 692 466" fill="none" stroke="#2a2a2a" stroke-width="0.9" stroke-linejoin="round" stroke-linecap="round"/>
<ellipse cx="632.6" cy="463" rx="3" ry="2" transform="rotate(0 632.6 463)" fill="none" stroke="#2a2a2a" stroke-width="0.9"/>
<ellipse cx="694.8" cy="458.6" rx="3.5" ry="2.2" transform="rotate(0 694.8 458.6)" fill="none" stroke="#2a2a2a" stroke-width="0.9"/>
<polygon points="636.6,481.3 636.6,480.8 636.7,480.3 636.8,479.8 637.0,479.4 637.2,479.0 642.8,472.5 643.0,472.2 643.4,471.9 643.7,471.7 644.1,471.6 644.5,471.5 645.0,471.5 645.4,471.5 645.9,471.7 646.3,471.9 646.7,472.1 647.1,472.4 647.5,472.8 647.8,473.2 648.1,473.7 648.4,474.1 648.6,474.7 648.8,475.2 648.9,475.7 648.9,476.2 648.9,476.7 648.8,477.2 648.7,477.7 648.5,478.1 648.2,478.5 642.8,485.0 642.5,485.3 642.1,485.6 641.8,485.8 641.4,485.9 641.0,486.0 640.5,486.0 640.1,486.0 639.6,485.8 639.2,485.6 638.8,485.4 638.4,485.1 638.0,484.7 637.7,484.3 637.4,483.8 637.1,483.4 636.9,482.8 636.7,482.3 636.6,481.8" fill="#fff" stroke="#2a2a2a" stroke-width="1" stroke-linejoin="round"/>
<ellipse cx="640" cy="482" rx="3.2" ry="4.2" transform="rotate(-25 640 482)" fill="#fff" stroke="#2a2a2a" stroke-width="1"/>
<ellipse cx="662.6" cy="514.3" rx="10.2" ry="6" transform="rotate(0 662.6 514.3)" fill="none" stroke="#1a1a1a" stroke-width="1.8"/>
<path d="M642.2 560.5 L642.2 563 Q663.2 578 684.1 563 L684.1 560.5" fill="#f0f0f0" stroke="#2a2a2a" stroke-width="1.1" stroke-linejoin="round" stroke-linecap="round"/>
<ellipse cx="663.2" cy="560.5" rx="21" ry="12.8" transform="rotate(0 663.2 560.5)" fill="#fafafa" stroke="#2a2a2a" stroke-width="1.2"/>
<ellipse cx="644.8" cy="558.7" rx="2" ry="1.3" transform="rotate(0 644.8 558.7)" fill="#e8e8e8" stroke="#2a2a2a" stroke-width="0.9"/>
<ellipse cx="650.5" cy="551" rx="2" ry="1.3" transform="rotate(0 650.5 551)" fill="#e8e8e8" stroke="#2a2a2a" stroke-width="0.9"/>
<ellipse cx="673.7" cy="551" rx="2" ry="1.3" transform="rotate(0 673.7 551)" fill="#e8e8e8" stroke="#2a2a2a" stroke-width="0.9"/>
<ellipse cx="680.5" cy="558.7" rx="2" ry="1.3" transform="rotate(0 680.5 558.7)" fill="#e8e8e8" stroke="#2a2a2a" stroke-width="0.9"/>
<ellipse cx="651" cy="564.4" rx="2" ry="1.3" transform="rotate(0 651 564.4)" fill="#e8e8e8" stroke="#2a2a2a" stroke-width="0.9"/>
<ellipse cx="674.8" cy="564.4" rx="2" ry="1.3" transform="rotate(0 674.8 564.4)" fill="#e8e8e8" stroke="#2a2a2a" stroke-width="0.9"/>
<ellipse cx="662.4" cy="569.6" rx="2" ry="1.3" transform="rotate(0 662.4 569.6)" fill="#e8e8e8" stroke="#2a2a2a" stroke-width="0.9"/>
<ellipse cx="663.6" cy="554.3" rx="11.4" ry="5.6" transform="rotate(0 663.6 554.3)" fill="#f4f4f4" stroke="#2a2a2a" stroke-width="1"/>
<path d="M654.2 531.4 L654.2 554.5 Q663.2 560 672.2 554.5 L672.2 531.4" fill="#f4f4f4" stroke="#2a2a2a" stroke-width="1.1" stroke-linejoin="round" stroke-linecap="round"/>
<path d="M654.2 542 Q663.2 546 672.2 542" fill="none" stroke="#555" stroke-width="1.3" stroke-linejoin="round" stroke-linecap="round"/>
<ellipse cx="663.2" cy="531.4" rx="9" ry="5.2" transform="rotate(0 663.2 531.4)" fill="#fff" stroke="#2a2a2a" stroke-width="1.1"/>
<ellipse cx="663.2" cy="531.4" rx="6" ry="3" transform="rotate(0 663.2 531.4)" fill="#f0f0f0" stroke="#2a2a2a" stroke-width="0.9"/>
<polygon points="669.6,583 669.6,587 672.5,588.7 677,588.7 680,587 680,583" fill="#f2f2f2" stroke="#2a2a2a" stroke-width="1.1" stroke-linejoin="round"/>
<ellipse cx="674.8" cy="582.8" rx="5.2" ry="3" transform="rotate(0 674.8 582.8)" fill="#fff" stroke="#2a2a2a" stroke-width="1.1"/>
<ellipse cx="674.8" cy="582.3" rx="2.5" ry="1.4" transform="rotate(0 674.8 582.3)" fill="none" stroke="#2a2a2a" stroke-width="0.8"/>
<polyline points="672.5,585 672.5,588.7" fill="none" stroke="#2a2a2a" stroke-width="0.8"/>
<polyline points="677,585 677,588.7" fill="none" stroke="#2a2a2a" stroke-width="0.8"/>
<text x="722.19 730.97 739.75 748.53 757.31 766.09 774.87 783.65 792.43 801.21 809.99" y="87.30" class="lb" transform="matrix(0.86,0,0,1,100.646,0)" style="font-size:12.2px">E0120–A081D</text>
<text x="571.21 578.30 585.40 592.49 599.59" y="141.00" class="lb" transform="matrix(0.84,0,0,1,91.152,0)" style="font-size:9.6px">13008</text>
<text x="560.01 566.85 573.70 580.54 587.39 594.23 601.08" y="149.80" class="lb" transform="matrix(0.84,0,0,1,89.360,0)" style="font-size:9.6px">13025/A</text>
<text x="691.47 698.53 705.59 712.65 719.70" y="150.80" class="lb" transform="matrix(0.84,0,0,1,110.256,0)" style="font-size:9.6px">92036</text>
<text x="586.71 593.78 600.84 607.90 614.97" y="211.60" class="lb" transform="matrix(0.84,0,0,1,93.632,0)" style="font-size:9.6px">13002</text>
<text x="558.37 565.22 572.07 578.92 585.77" y="227.60" class="lb" transform="matrix(0.84,0,0,1,88.960,0)" style="font-size:9.6px">92036</text>
<text x="694.51 701.70 708.89 716.08 723.28" y="213.40" class="lb" transform="matrix(0.84,0,0,1,110.880,0)" style="font-size:9.6px">13001</text>
<text x="694.51 701.49 708.48 715.46 722.44 729.43 736.41" y="222.70" class="lb" transform="matrix(0.84,0,0,1,110.880,0)" style="font-size:9.6px">13029/A</text>
<text x="720.37 727.22 734.07 740.92 747.77" y="282.60" class="lb" transform="matrix(0.84,0,0,1,114.880,0)" style="font-size:9.6px">46102</text>
<text x="768.57 775.69 782.81 789.92 797.04" y="275.70" class="lb" transform="matrix(0.84,0,0,1,122.592,0)" style="font-size:9.6px">92026</text>
<text x="706.27 713.34 720.40 727.47 734.53" y="315.80" class="lb" transform="matrix(0.84,0,0,1,112.624,0)" style="font-size:9.6px">92141</text>
<text x="480.31 487.29 494.28 501.26 508.24 515.23 522.21" y="330.10" class="lb" transform="matrix(0.84,0,0,1,76.608,0)" style="font-size:9.6px">13251/A</text>
<text x="548.07 555.25 562.43 569.60 576.78" y="342.50" class="lb" transform="matrix(0.84,0,0,1,87.312,0)" style="font-size:9.6px">92002</text>
<text x="485.11 492.18 499.25 506.33 513.40" y="362.60" class="lb" transform="matrix(0.84,0,0,1,77.376,0)" style="font-size:9.6px">13031</text>
<text x="577.17 584.44 591.71" y="365.70" class="lb" transform="matrix(0.84,0,0,1,91.968,0)" style="font-size:9.6px">510</text>
<text x="520.67 527.52 534.37 541.22 548.07" y="393.90" class="lb" transform="matrix(0.84,0,0,1,82.928,0)" style="font-size:9.6px">46102</text>
<text x="536.97 543.98 550.98 557.99 564.99" y="427.70" class="lb" transform="matrix(0.84,0,0,1,85.536,0)" style="font-size:9.6px">92141</text>
<text x="467.17 474.30 481.42 488.55 495.67" y="450.30" class="lb" transform="matrix(0.84,0,0,1,74.368,0)" style="font-size:9.6px">59051</text>
<text x="437.07 444.13 451.19 458.25 465.30" y="472.50" class="lb" transform="matrix(0.84,0,0,1,69.552,0)" style="font-size:9.6px">59056</text>
<text x="730.31 737.35 744.38 751.42 758.45" y="471.70" class="lb" transform="matrix(0.84,0,0,1,116.608,0)" style="font-size:9.6px">13042</text>
<text x="694.87 702.76 710.65 718.55 726.44" y="517.50" class="lb" transform="matrix(0.84,0,0,1,110.800,0)" style="font-size:9.6px">92055</text>
<text x="708.11 715.50 722.89 730.29 737.68" y="562.30" class="lb" transform="matrix(0.84,0,0,1,113.056,0)" style="font-size:9.6px">13107</text>
<text x="704.27 711.09 717.91 724.73 731.55" y="588.10" class="lb" transform="matrix(0.84,0,0,1,112.304,0)" style="font-size:9.6px">92015</text>
<text x="536.47 543.38 550.29 557.21 564.12 571.03 577.94 584.85 591.76" y="582.30" class="lb" transform="matrix(0.84,0,0,1,85.456,0)" style="font-size:9.6px">92025/A~H</text>
<rect x="690" y="509" width="33" height="9" fill="none" stroke="#c4323e" stroke-width="2"/>
</svg>
</div>

<div class="row" style="top:631px;background:#fff"><svg class="ic" viewBox="0 0 16 16"><rect x="0.5" y="1.8" width="14.5" height="13.7" rx="1.5" fill="#fff" stroke="#000" stroke-width="1.1"/><path d="M1.2 14 L1.2 9 L6 14.8 Z" fill="#dfe6f7"/><g fill="#fff" stroke="#000" stroke-width="0.9"><ellipse cx="1.8" cy="1.6" rx="0.9" ry="1.3"/><ellipse cx="3.9" cy="1.6" rx="0.9" ry="1.3"/><ellipse cx="6" cy="1.6" rx="0.9" ry="1.3"/><ellipse cx="8.1" cy="1.6" rx="0.9" ry="1.3"/><ellipse cx="10.2" cy="1.6" rx="0.9" ry="1.3"/><ellipse cx="12.4" cy="1.6" rx="0.9" ry="1.3"/></g><g stroke="#000" stroke-width="1"><line x1="3" y1="5.5" x2="6" y2="5.5"/><line x1="7" y1="5.5" x2="8.8" y2="5.5"/><line x1="3" y1="7.3" x2="5.6" y2="7.3"/><line x1="9" y1="9.6" x2="10.6" y2="9.6"/><line x1="10.2" y1="11.5" x2="11.2" y2="11.5"/></g><polyline points="2.3,9.4 5.4,12.6 12.6,4.3" fill="none" stroke="#12127a" stroke-width="2.4" stroke-linejoin="round"/></svg><span class="c" style="left:144px">92025G</span><span class="c" style="left:255px">92025-2173</span><span class="c" style="left:498px">SHIM-T=1.48</span><span class="c" style="left:739px">AR</span></div>
<div class="row" style="top:649px;background:#e6e3df"><svg class="ic" viewBox="0 0 16 16"><rect x="0.5" y="1.8" width="14.5" height="13.7" rx="1.5" fill="#fff" stroke="#000" stroke-width="1.1"/><path d="M1.2 14 L1.2 9 L6 14.8 Z" fill="#dfe6f7"/><g fill="#fff" stroke="#000" stroke-width="0.9"><ellipse cx="1.8" cy="1.6" rx="0.9" ry="1.3"/><ellipse cx="3.9" cy="1.6" rx="0.9" ry="1.3"/><ellipse cx="6" cy="1.6" rx="0.9" ry="1.3"/><ellipse cx="8.1" cy="1.6" rx="0.9" ry="1.3"/><ellipse cx="10.2" cy="1.6" rx="0.9" ry="1.3"/><ellipse cx="12.4" cy="1.6" rx="0.9" ry="1.3"/></g><g stroke="#000" stroke-width="1"><line x1="3" y1="5.5" x2="6" y2="5.5"/><line x1="7" y1="5.5" x2="8.8" y2="5.5"/><line x1="3" y1="7.3" x2="5.6" y2="7.3"/><line x1="9" y1="9.6" x2="10.6" y2="9.6"/><line x1="10.2" y1="11.5" x2="11.2" y2="11.5"/></g><polyline points="2.3,9.4 5.4,12.6 12.6,4.3" fill="none" stroke="#12127a" stroke-width="2.4" stroke-linejoin="round"/></svg><span class="c" style="left:144px">92025H</span><span class="c" style="left:255px">92025-2207</span><span class="c" style="left:498px">SHIM-T=1.53</span><span class="c" style="left:739px">AR</span></div>
<div class="row" style="top:667px;background:#fff"><svg class="ic" viewBox="0 0 16 16"><rect x="0.5" y="1.8" width="14.5" height="13.7" rx="1.5" fill="#fff" stroke="#000" stroke-width="1.1"/><path d="M1.2 14 L1.2 9 L6 14.8 Z" fill="#dfe6f7"/><g fill="#fff" stroke="#000" stroke-width="0.9"><ellipse cx="1.8" cy="1.6" rx="0.9" ry="1.3"/><ellipse cx="3.9" cy="1.6" rx="0.9" ry="1.3"/><ellipse cx="6" cy="1.6" rx="0.9" ry="1.3"/><ellipse cx="8.1" cy="1.6" rx="0.9" ry="1.3"/><ellipse cx="10.2" cy="1.6" rx="0.9" ry="1.3"/><ellipse cx="12.4" cy="1.6" rx="0.9" ry="1.3"/></g><g stroke="#000" stroke-width="1"><line x1="3" y1="5.5" x2="6" y2="5.5"/><line x1="7" y1="5.5" x2="8.8" y2="5.5"/><line x1="3" y1="7.3" x2="5.6" y2="7.3"/><line x1="9" y1="9.6" x2="10.6" y2="9.6"/><line x1="10.2" y1="11.5" x2="11.2" y2="11.5"/></g><polyline points="2.3,9.4 5.4,12.6 12.6,4.3" fill="none" stroke="#12127a" stroke-width="2.4" stroke-linejoin="round"/></svg><span class="c" style="left:144px">92026</span><span class="c" style="left:255px">92026-2052</span><span class="c" style="left:498px">SPACER</span><span class="c" style="left:739px">1</span></div>
<div class="row" style="top:685px;background:#e6e3df"><svg class="ic" viewBox="0 0 16 16"><rect x="0.5" y="1.8" width="14.5" height="13.7" rx="1.5" fill="#fff" stroke="#000" stroke-width="1.1"/><path d="M1.2 14 L1.2 9 L6 14.8 Z" fill="#dfe6f7"/><g fill="#fff" stroke="#000" stroke-width="0.9"><ellipse cx="1.8" cy="1.6" rx="0.9" ry="1.3"/><ellipse cx="3.9" cy="1.6" rx="0.9" ry="1.3"/><ellipse cx="6" cy="1.6" rx="0.9" ry="1.3"/><ellipse cx="8.1" cy="1.6" rx="0.9" ry="1.3"/><ellipse cx="10.2" cy="1.6" rx="0.9" ry="1.3"/><ellipse cx="12.4" cy="1.6" rx="0.9" ry="1.3"/></g><g stroke="#000" stroke-width="1"><line x1="3" y1="5.5" x2="6" y2="5.5"/><line x1="7" y1="5.5" x2="8.8" y2="5.5"/><line x1="3" y1="7.3" x2="5.6" y2="7.3"/><line x1="9" y1="9.6" x2="10.6" y2="9.6"/><line x1="10.2" y1="11.5" x2="11.2" y2="11.5"/></g><polyline points="2.3,9.4 5.4,12.6 12.6,4.3" fill="none" stroke="#12127a" stroke-width="2.4" stroke-linejoin="round"/></svg><span class="c" style="left:144px">92036</span><span class="c" style="left:255px">92036-008</span><span class="c" style="left:498px">RING-SNAP,PISTON PIN</span><span class="c" style="left:739px">2</span></div>
<div class="row" style="top:703px;background:#6b9bd5;color:#102848"><svg class="ic" viewBox="0 0 16 16"><rect x="0.5" y="1.8" width="14.5" height="13.7" rx="1.5" fill="#fff" stroke="#000" stroke-width="1.1"/><path d="M1.2 14 L1.2 9 L6 14.8 Z" fill="#dfe6f7"/><g fill="#fff" stroke="#000" stroke-width="0.9"><ellipse cx="1.8" cy="1.6" rx="0.9" ry="1.3"/><ellipse cx="3.9" cy="1.6" rx="0.9" ry="1.3"/><ellipse cx="6" cy="1.6" rx="0.9" ry="1.3"/><ellipse cx="8.1" cy="1.6" rx="0.9" ry="1.3"/><ellipse cx="10.2" cy="1.6" rx="0.9" ry="1.3"/><ellipse cx="12.4" cy="1.6" rx="0.9" ry="1.3"/></g><g stroke="#000" stroke-width="1"><line x1="3" y1="5.5" x2="6" y2="5.5"/><line x1="7" y1="5.5" x2="8.8" y2="5.5"/><line x1="3" y1="7.3" x2="5.6" y2="7.3"/><line x1="9" y1="9.6" x2="10.6" y2="9.6"/><line x1="10.2" y1="11.5" x2="11.2" y2="11.5"/></g><polyline points="2.3,9.4 5.4,12.6 12.6,4.3" fill="none" stroke="#12127a" stroke-width="2.4" stroke-linejoin="round"/></svg><span class="c" style="left:144px">92055</span><span class="c" style="left:255px">92055-2072</span><span class="c" style="left:498px">O-RING</span><span class="c" style="left:739px">1</span></div>
<div class="row" style="top:721px;background:#e6e3df"><svg class="ic" viewBox="0 0 16 16"><rect x="0.5" y="1.8" width="14.5" height="13.7" rx="1.5" fill="#fff" stroke="#000" stroke-width="1.1"/><path d="M1.2 14 L1.2 9 L6 14.8 Z" fill="#dfe6f7"/><g fill="#fff" stroke="#000" stroke-width="0.9"><ellipse cx="1.8" cy="1.6" rx="0.9" ry="1.3"/><ellipse cx="3.9" cy="1.6" rx="0.9" ry="1.3"/><ellipse cx="6" cy="1.6" rx="0.9" ry="1.3"/><ellipse cx="8.1" cy="1.6" rx="0.9" ry="1.3"/><ellipse cx="10.2" cy="1.6" rx="0.9" ry="1.3"/><ellipse cx="12.4" cy="1.6" rx="0.9" ry="1.3"/></g><g stroke="#000" stroke-width="1"><line x1="3" y1="5.5" x2="6" y2="5.5"/><line x1="7" y1="5.5" x2="8.8" y2="5.5"/><line x1="3" y1="7.3" x2="5.6" y2="7.3"/><line x1="9" y1="9.6" x2="10.6" y2="9.6"/><line x1="10.2" y1="11.5" x2="11.2" y2="11.5"/></g><polyline points="2.3,9.4 5.4,12.6 12.6,4.3" fill="none" stroke="#12127a" stroke-width="2.4" stroke-linejoin="round"/></svg></div>

<div id="th" class="abs">
<span class="t" style="left:123px">Ref #</span>
<span class="t" style="left:233px">Part #</span>
<span class="t" style="left:469px">Description</span>
<span class="t" style="left:732px">Qty</span>
<span class="t" style="left:876px">Context Note</span>
<span class="t" style="left:1086px">Foot Note</span>
<svg class="sort" style="left:76.8px;top:14px" width="9" height="9" viewBox="0 0 9 9"><polygon points="4.5,0 9,4 0,4" fill="#fff"/><polygon points="0,5 9,5 4.5,9" fill="#fff"/></svg><svg class="sort" style="left:181.2px;top:14px" width="9" height="9" viewBox="0 0 9 9"><polygon points="4.5,0 9,4 0,4" fill="#fff"/><polygon points="0,5 9,5 4.5,9" fill="#fff"/></svg><svg class="sort" style="left:300.1px;top:14px" width="9" height="9" viewBox="0 0 9 9"><polygon points="4.5,0 9,4 0,4" fill="#fff"/><polygon points="0,5 9,5 4.5,9" fill="#fff"/></svg><svg class="sort" style="left:665.1px;top:14px" width="9" height="9" viewBox="0 0 9 9"><polygon points="4.5,0 9,4 0,4" fill="#fff"/><polygon points="0,5 9,5 4.5,9" fill="#fff"/></svg><svg class="sort" style="left:784.9px;top:14px" width="9" height="9" viewBox="0 0 9 9"><polygon points="4.5,0 9,4 0,4" fill="#fff"/><polygon points="0,5 9,5 4.5,9" fill="#fff"/></svg><svg class="sort" style="left:1003.7px;top:14px" width="9" height="9" viewBox="0 0 9 9"><polygon points="4.5,0 9,4 0,4" fill="#fff"/><polygon points="0,5 9,5 4.5,9" fill="#fff"/></svg><svg class="cb" style="left:454px;top:11px" width="13" height="13" viewBox="0 0 13 13"><rect width="13" height="13" rx="2" fill="#1a73e8"/><polyline points="2.8,6.6 5.3,9.2 10.3,3.6" fill="none" stroke="#fff" stroke-width="1.8"/></svg><svg class="cb" style="left:718px;top:11px" width="13" height="13" viewBox="0 0 13 13"><rect width="13" height="13" rx="2" fill="#1a73e8"/><polyline points="2.8,6.6 5.3,9.2 10.3,3.6" fill="none" stroke="#fff" stroke-width="1.8"/></svg><svg class="cb" style="left:862px;top:11px" width="13" height="13" viewBox="0 0 13 13"><rect width="13" height="13" rx="2" fill="#1a73e8"/><polyline points="2.8,6.6 5.3,9.2 10.3,3.6" fill="none" stroke="#fff" stroke-width="1.8"/></svg><svg class="cb" style="left:1070px;top:11px" width="13" height="13" viewBox="0 0 13 13"><rect width="13" height="13" rx="2" fill="#1a73e8"/><polyline points="2.8,6.6 5.3,9.2 10.3,3.6" fill="none" stroke="#fff" stroke-width="1.8"/></svg>
</div>
<div id="lb" class="abs"></div>
</body></html>
